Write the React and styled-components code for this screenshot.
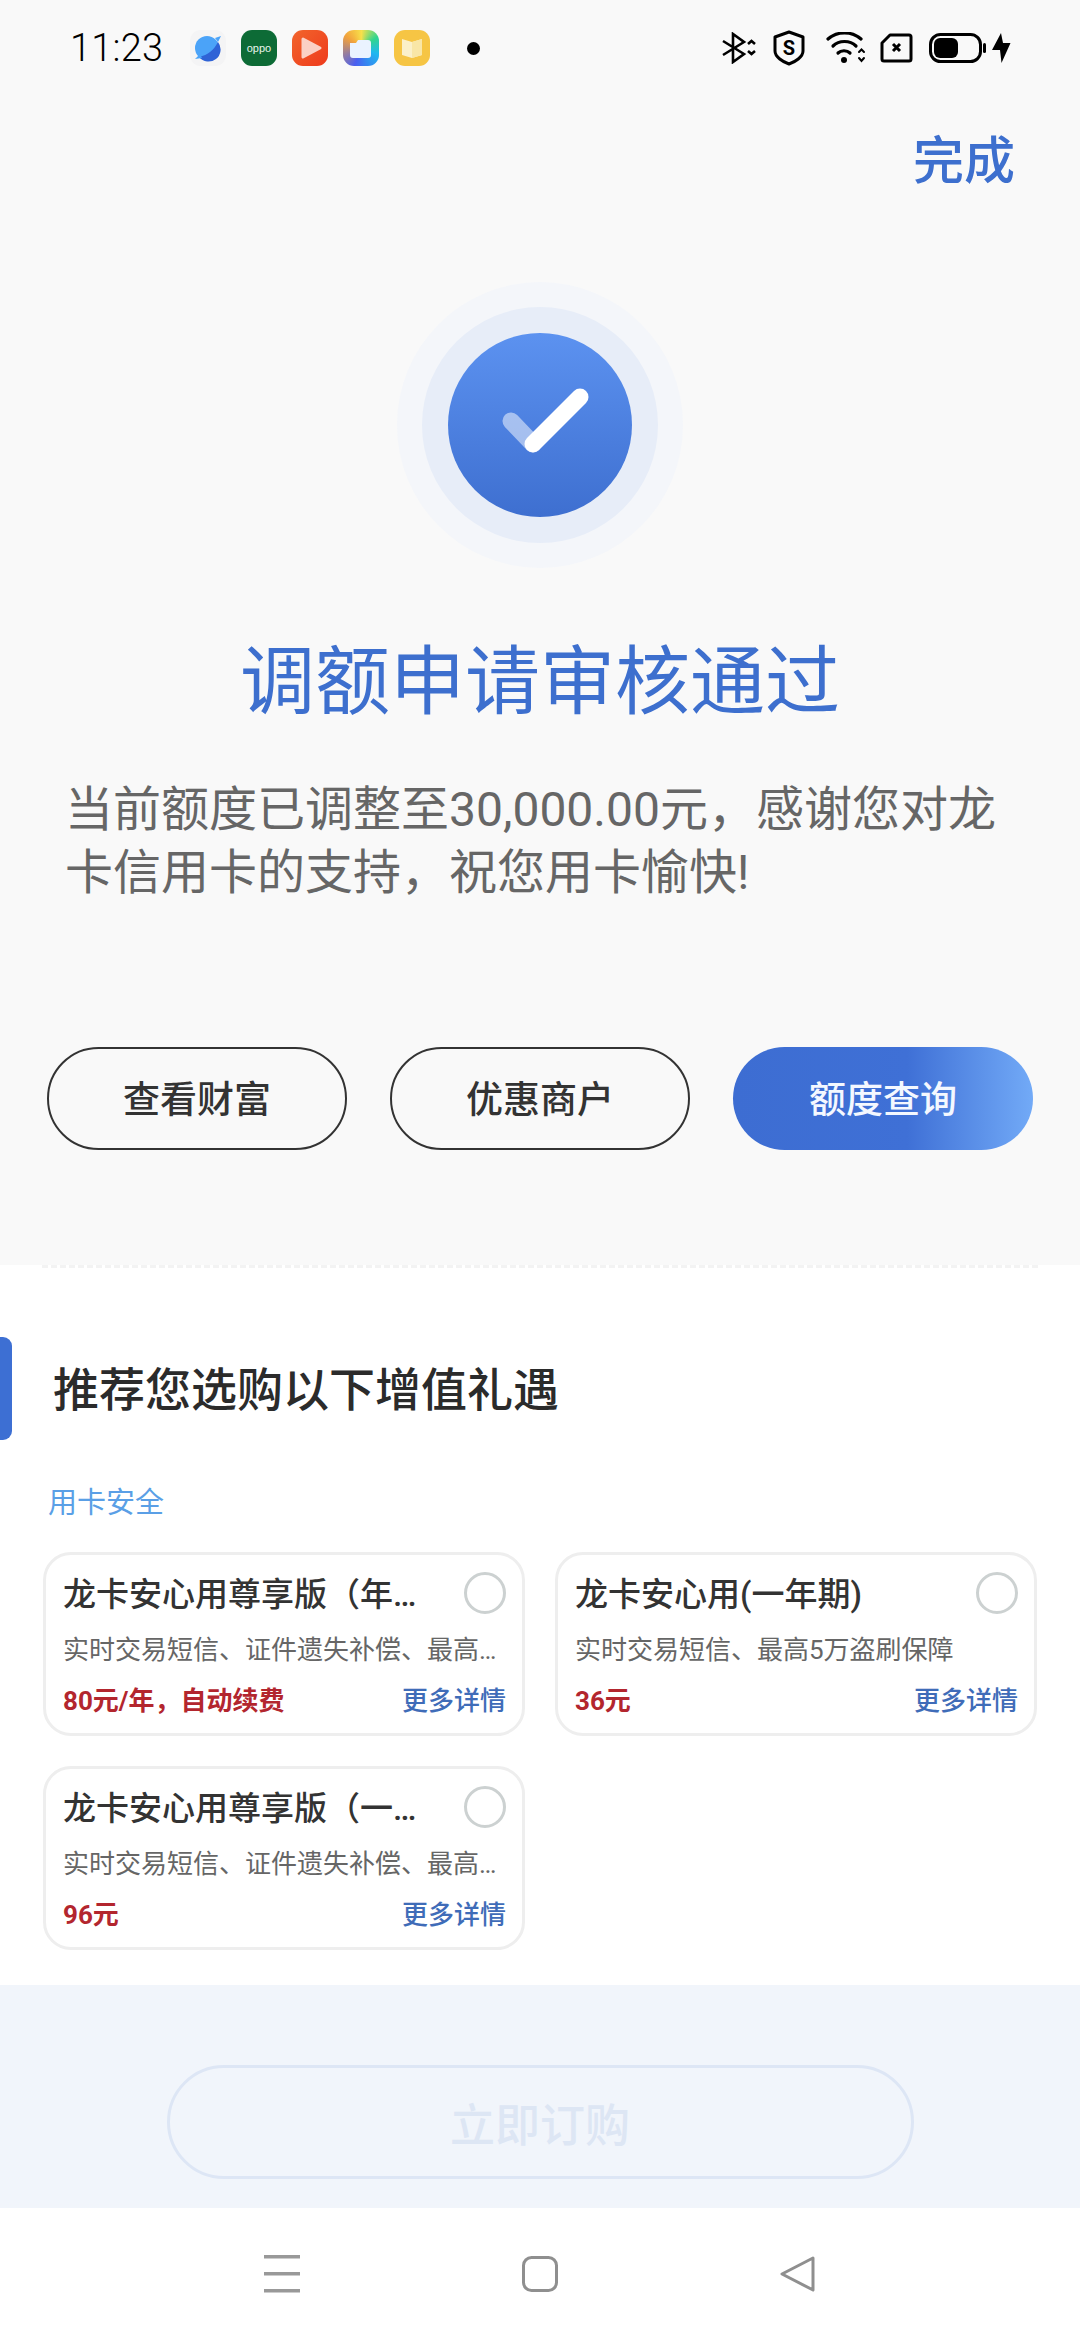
import React from "react";
import styled, { createGlobalStyle } from "styled-components";

const GlobalStyle = createGlobalStyle`
  html, body {
    margin: 0;
    padding: 0;
    background: #fff;
  }
  * {
    box-sizing: border-box;
  }
`;

const FONT = `Roboto, "Noto Sans CJK SC", sans-serif`;

const Page = styled.div`
  width: 1080px;
  height: 2340px;
  display: flex;
  flex-direction: column;
  overflow: hidden;
  font-family: ${FONT};
  background: #fff;
`;

const Hero = styled.section`
  height: 1265px;
  background: #f9f9f9;
  display: flex;
  flex-direction: column;
`;

const StatusBar = styled.div`
  height: 96px;
  padding: 0 69px 0 70px;
  display: flex;
  align-items: center;
`;

const Time = styled.div`
  width: 120px;
  margin-top: -1px;
  font-size: 38px;
  font-weight: 300;
  color: #000;
  letter-spacing: 0.2px;
`;

const AppIcons = styled.div`
  display: flex;
  align-items: center;
  gap: 15px;
`;

const AppIcon = styled.div`
  width: 36px;
  height: 36px;
  border-radius: 11px;
  background: ${p => p.$bg};
  display: flex;
  align-items: center;
  justify-content: center;
  overflow: hidden;
`;

const OppoText = styled.span`
  font-family: "Liberation Sans", sans-serif;
  font-size: 11px;
  letter-spacing: 0;
  color: #e8f5ec;
`;

const NotifyDot = styled.div`
  width: 13px;
  height: 13px;
  margin-left: 37px;
  border-radius: 50%;
  background: #000;
`;

const StatusIcons = styled.div`
  margin-left: auto;
  display: flex;
  align-items: center;
`;

const Glyph = styled.svg`
  display: block;
  flex: none;
  margin-left: ${p => p.$gap || 0}px;
`;

const DoneLink = styled.div`
  align-self: flex-end;
  margin: 36px 65px 0 0;
  font-size: 51px;
  line-height: 60px;
  font-weight: 500;
  color: #3d6fce;
`;

const RingOuter = styled.div`
  align-self: center;
  width: 286px;
  height: 286px;
  margin-top: 90px;
  border-radius: 50%;
  background: #f4f6fa;
  display: flex;
  align-items: center;
  justify-content: center;
`;

const RingInner = styled.div`
  width: 236px;
  height: 236px;
  border-radius: 50%;
  background: #e7edf8;
  display: flex;
  align-items: center;
  justify-content: center;
`;

const CheckDisc = styled.div`
  width: 184px;
  height: 184px;
  border-radius: 50%;
  background: linear-gradient(180deg, #5c92f0 0%, #3e6fd0 100%);
`;

const Title = styled.h1`
  margin: 64px 0 0;
  text-align: center;
  font-size: 75px;
  line-height: 100px;
  font-weight: 400;
  color: #3d6fce;
`;

const Message = styled.p`
  margin: 46px 0 0;
  padding: 0 65px;
  font-size: 48px;
  line-height: 63px;
  font-weight: 400;
  color: #666;
`;

const ActionRow = styled.div`
  margin-top: 143px;
  padding: 0 47px;
  display: flex;
  gap: 43px;
`;

const ActionButton = styled.div`
  width: 300px;
  height: 103px;
  padding-bottom: 3px;
  border-radius: 52px;
  display: flex;
  align-items: center;
  justify-content: center;
  font-size: 37px;
  font-weight: 500;
  color: ${p => (p.$primary ? "#f4f8ff" : "#333")};
  border: ${p => (p.$primary ? "none" : "2px solid #333")};
  background: ${p =>
    p.$primary
      ? "linear-gradient(90deg, #3d6dd2 0%, #3f70d6 58%, #72aaf7 100%)"
      : "transparent"};
`;

const Offers = styled.section`
  flex: 1;
  display: flex;
  flex-direction: column;
`;

const Divider = styled.div`
  margin: 0 42px;
  border-top: 3px dashed #f3f3f3;
`;

const OffersHeader = styled.div`
  margin-top: 69px;
  display: flex;
  align-items: center;
`;

const HeaderTab = styled.div`
  width: 12px;
  height: 103px;
  background: #3d6fd3;
  border-radius: 0 9px 9px 0;
`;

const OffersTitle = styled.h2`
  margin: 2px 0 0 41px;
  font-size: 46px;
  line-height: 60px;
  font-weight: 500;
  color: #2b2b2b;
`;

const Category = styled.div`
  margin: 43px 0 0 48px;
  font-size: 29px;
  line-height: 40px;
  color: #5a9fe6;
`;

const CardGrid = styled.div`
  margin-top: 29px;
  padding: 0 43px;
  display: grid;
  grid-template-columns: 482px 482px;
  column-gap: 30px;
  row-gap: 30px;
`;

const Card = styled.div`
  height: 184px;
  padding: 17px 16px 0 17px;
  border: 3px solid #eeeeee;
  border-radius: 28px;
  background: #fff;
`;

const CardTop = styled.div`
  height: 42px;
  display: flex;
  align-items: center;
  justify-content: space-between;
`;

const CardName = styled.div`
  margin-top: 3px;
  font-size: 33px;
  line-height: 42px;
  font-weight: 500;
  color: #333;
  white-space: nowrap;
`;

const Radio = styled.div`
  width: 42px;
  height: 42px;
  border-radius: 50%;
  border: 3px solid #ccd1d1;
`;

const CardDesc = styled.div`
  margin-top: 18px;
  font-size: 26px;
  line-height: 36px;
  color: #666;
  white-space: nowrap;
`;

const CardBottom = styled.div`
  margin-top: 15px;
  display: flex;
  align-items: center;
  justify-content: space-between;
`;

const Price = styled.div`
  font-size: 26px;
  line-height: 36px;
  font-weight: 700;
  color: #b3262e;
`;

const MoreLink = styled.div`
  font-size: 26px;
  line-height: 36px;
  font-weight: 500;
  color: #3f6cb8;
`;

const Footer = styled.div`
  height: 223px;
  padding-top: 80px;
  background: #f1f5fb;
  display: flex;
  align-items: flex-start;
  justify-content: center;
  flex: none;
`;

const BuyButton = styled.div`
  width: 747px;
  height: 114px;
  border: 3px solid #dde6f5;
  border-radius: 57px;
  display: flex;
  align-items: center;
  justify-content: center;
  font-size: 45px;
  font-weight: 500;
  color: #dde6f4;
`;

const NavBar = styled.nav`
  height: 132px;
  flex: none;
  background: #fff;
  padding: 0 264px;
  display: flex;
  align-items: center;
  justify-content: space-between;
`;

const offers = [
  { name: "龙卡安心用尊享版（年…", desc: "实时交易短信、证件遗失补偿、最高…", price: "80元/年，自动续费" },
  { name: "龙卡安心用(一年期)", desc: "实时交易短信、最高5万盗刷保障", price: "36元" },
  { name: "龙卡安心用尊享版（一…", desc: "实时交易短信、证件遗失补偿、最高…", price: "96元" }
];

function App() {
  return (
    <Page>
      <GlobalStyle />
      <Hero>
        <StatusBar>
          <Time>11:23</Time>
          <AppIcons>
            <AppIcon $bg="#f4f4f5">
              <svg width="36" height="36" viewBox="0 0 36 36">
                <circle cx="17" cy="18" r="12" fill="#4ba3f8" />
                <path d="M9 27 a12 12 0 0 0 19-15 C24 20 18 25 9 27Z" fill="#2f63d6" />
                <path d="M5 29 L10 24 L12 28Z M25 8 L31 6 L28 12Z" fill="#4ba3f8" />
              </svg>
            </AppIcon>
            <AppIcon $bg="#0d6b36">
              <OppoText>oppo</OppoText>
            </AppIcon>
            <AppIcon $bg="linear-gradient(135deg, #f2652c, #ee3a1c)">
              <svg width="36" height="36" viewBox="0 0 36 36">
                <path d="M11 9 L28 18 L11 27Z" fill="#fbd0c4" stroke="#fbd0c4" strokeWidth="3" strokeLinejoin="round" />
              </svg>
            </AppIcon>
            <AppIcon $bg="conic-gradient(from 200deg, #4a5ff0, #f2a23c 30%, #f7e04a 45%, #2fd58f 60%, #1fb8f0 75%, #4a5ff0)">
              <svg width="36" height="36" viewBox="0 0 36 36">
                <path d="M7 13 h6 l2-3 h10 a3 3 0 0 1 3 3 v12 a3 3 0 0 1-3 3 H10 a3 3 0 0 1-3-3Z" fill="#eaf3ff" />
              </svg>
            </AppIcon>
            <AppIcon $bg="#f6c544">
              <svg width="36" height="36" viewBox="0 0 36 36">
                <path d="M8 9 L18 12 L28 9 V25 L18 28 L8 25Z" fill="#fbf0c9" />
                <path d="M18 12 L28 9 V25 L18 28Z" fill="#f9e6a6" />
              </svg>
            </AppIcon>
          </AppIcons>
          <NotifyDot />
          <StatusIcons>
            <Glyph width="34" height="32" viewBox="0 0 34 32" fill="none" stroke="#000" strokeWidth="2.6">
              <path d="M1 9 L22 22 L11 30 V2 L22 10 L1 23" />
              <path d="M26 12 L29.5 9 L33 12 M26 19 L29.5 22 L33 19" />
            </Glyph>
            <Glyph $gap={17} width="32" height="36" viewBox="0 0 32 36" fill="none">
              <path d="M16 2 L30 7 V21 C30 27 22 32 16 34 C10 32 2 27 2 21 V7Z" stroke="#000" strokeWidth="3" strokeLinejoin="round" />
              <text x="16" y="25" textAnchor="middle" fontFamily="Roboto, sans-serif" fontSize="20" fontWeight="700" fill="#000">S</text>
            </Glyph>
            <Glyph $gap={21} width="40" height="32" viewBox="0 0 40 32" fill="none" stroke="#000" strokeWidth="3.2" strokeLinecap="round">
              <path d="M2 7 C11 -1 26 -1 35 7" />
              <path d="M7 14 C13 8 24 8 30 14" />
              <path d="M12 21 C15 18 21 18 24 21" />
              <circle cx="18" cy="28" r="3" fill="#000" stroke="none" />
              <path d="M33 20 L35.5 17.5 L38 20 M33 26 L35.5 29 L38 26" strokeWidth="2" />
            </Glyph>
            <Glyph $gap={14} width="33" height="30" viewBox="0 0 33 30" fill="none">
              <path d="M10 2 H29 Q31 2 31 4 V26 Q31 28 29 28 H4 Q2 28 2 26 V10Z" stroke="#000" strokeWidth="3" strokeLinejoin="round" />
              <path d="M13 11 L20 18 M20 11 L13 18" stroke="#000" strokeWidth="3" />
            </Glyph>
            <Glyph $gap={16} width="57" height="30" viewBox="0 0 57 30">
              <rect x="1.5" y="1.5" width="50" height="27" rx="10" fill="none" stroke="#000" strokeWidth="3" />
              <rect x="5" y="5" width="24" height="20" rx="6" fill="#000" />
              <rect x="54" y="10" width="3" height="10" rx="1.5" fill="#000" />
            </Glyph>
            <Glyph $gap={6} width="19" height="30" viewBox="0 0 19 30">
              <path d="M9 0 L0 17 H8 L9.5 30 L18.5 10 H11Z" fill="#000" />
            </Glyph>
          </StatusIcons>
        </StatusBar>
        <DoneLink>完成</DoneLink>
        <RingOuter>
          <RingInner>
            <CheckDisc>
              <svg width="184" height="184" viewBox="0 0 184 184" fill="none" strokeLinecap="round" strokeWidth="17">
                <path d="M63 88 L85 111" stroke="#fff" strokeOpacity="0.5" />
                <path d="M85 111 L132 64" stroke="#fff" />
              </svg>
            </CheckDisc>
          </RingInner>
        </RingOuter>
        <Title>调额申请审核通过</Title>
        <Message>当前额度已调整至30,000.00元，感谢您对龙卡信用卡的支持，祝您用卡愉快!</Message>
        <ActionRow>
          <ActionButton>查看财富</ActionButton>
          <ActionButton>优惠商户</ActionButton>
          <ActionButton $primary>额度查询</ActionButton>
        </ActionRow>
      </Hero>
      <Offers>
        <Divider />
        <OffersHeader>
          <HeaderTab />
          <OffersTitle>推荐您选购以下增值礼遇</OffersTitle>
        </OffersHeader>
        <Category>用卡安全</Category>
        <CardGrid>
          {offers.map((offer, key) => (
            <Card key={key}>
              <CardTop>
                <CardName>{offer.name}</CardName>
                <Radio />
              </CardTop>
              <CardDesc>{offer.desc}</CardDesc>
              <CardBottom>
                <Price>{offer.price}</Price>
                <MoreLink>更多详情</MoreLink>
              </CardBottom>
            </Card>
          ))}
        </CardGrid>
      </Offers>
      <Footer>
        <BuyButton>立即订购</BuyButton>
      </Footer>
      <NavBar>
        <svg width="36" height="38" viewBox="0 0 36 38" fill="#999">
          <rect x="0" y="0" width="36" height="3.5" />
          <rect x="0" y="17" width="36" height="3.5" />
          <rect x="0" y="34" width="36" height="3.5" />
        </svg>
        <svg width="36" height="36" viewBox="0 0 36 36" fill="none">
          <rect x="1.5" y="1.5" width="33" height="33" rx="8" stroke="#8f8f8f" strokeWidth="3" />
        </svg>
        <svg width="36" height="36" viewBox="0 0 36 36" fill="none">
          <path d="M33 2 L2 18 L33 34Z" stroke="#8f8f8f" strokeWidth="3" strokeLinejoin="round" />
        </svg>
      </NavBar>
    </Page>
  );
}

export default App;
